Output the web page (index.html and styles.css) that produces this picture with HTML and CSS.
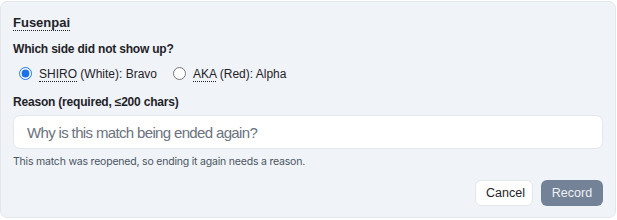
FILE: index.html
```html
<!DOCTYPE html>
<html lang="en">
<head>
	<meta charset="UTF-8">
	<title>End match</title>
	<link rel="stylesheet" href="styles.css">
</head>
<body>
	<div class="panel">
		<div class="panel-title"><abbr title="Player">Fusenpai</abbr></div>
		<div class="field-label">Which side did not show up?</div>
		<div class="side-list">
			<label class="side-option">
				<input type="radio" name="side" checked>
				<span><abbr title="White side">SHIRO</abbr> (White): Bravo</span>
			</label>
			<label class="side-option">
				<input type="radio" name="side">
				<span><abbr title="Red side">AKA</abbr> (Red): Alpha</span>
			</label>
		</div>
		<div class="field-label">Reason (required, ≤200 chars)</div>
		<input type="text" class="reason-input" maxlength="200" placeholder="Why is this match being ended again?">
		<div class="hint">This match was reopened, so ending it again needs a reason.</div>
		<div class="actions">
			<button class="btn btn-cancel">Cancel</button>
			<button class="btn btn-record" disabled>Record</button>
		</div>
	</div>
</body>
</html>
```
FILE: styles.css
```css
* {
	margin: 0;
	padding: 0;
	box-sizing: border-box;
}
body {
	font-family: "Liberation Sans", Arial, sans-serif;
	color: #1f2328;
	background: #fff;
	padding: 1px 1px 2px 0;
}
.panel {
	height: 217px;
	background-color: #f0f3f8;
	border: 1px solid #e3e6eb;
	border-radius: 7px;
	padding: 12px 12px 0 12px;
}
abbr {
	text-decoration: none;
	border-bottom: 1.5px dotted #1f2328;
}
.panel-title {
	font-size: 13px;
	font-weight: bold;
	line-height: 18px;
	height: 22px;
}
.field-label {
	font-size: 12px;
	font-weight: bold;
	line-height: 16px;
	margin-top: 5px;
	letter-spacing: -0.2px;
}
.side-list {
	display: flex;
	gap: 16px;
	height: 32px;
	padding: 9px 0 0 6px;
}
.side-option {
	display: flex;
	align-items: flex-start;
	gap: 7px;
	font-size: 12px;
	line-height: 16px;
}
.side-option input {
	width: 13px;
	height: 13px;
	margin-top: 1px;
	accent-color: #1a73e8;
}
.reason-input {
	display: block;
	width: 100%;
	height: 34px;
	margin-top: 5px;
	border: 1px solid #e3e6eb;
	border-radius: 7px;
	background: #fff;
	padding: 0 13px;
	font-family: "Liberation Sans", Arial, sans-serif;
	font-size: 15px;
	letter-spacing: -0.65px;
	color: #1f2328;
}
.reason-input::placeholder {
	color: #6b7280;
}
.hint {
	font-family: Inter, "Liberation Sans", sans-serif;
	font-size: 10.5px;
	color: #4b5563;
	margin-top: 6px;
	line-height: 14px;
	letter-spacing: -0.2px;
}
.actions {
	display: flex;
	justify-content: flex-end;
	gap: 8px;
	margin-top: 11px;
}
.btn {
	height: 26px;
	border-radius: 6px;
	font-family: "Liberation Sans", Arial, sans-serif;
	font-size: 12.5px;
	padding: 0 10px;
}
.btn-cancel {
	background: #fff;
	border: 1px solid #e3e6eb;
	color: #1f2328;
	width: 58px;
}
.btn-record {
	background: #748297;
	border: none;
	color: #eef1f5;
	width: 62px;
}
```
